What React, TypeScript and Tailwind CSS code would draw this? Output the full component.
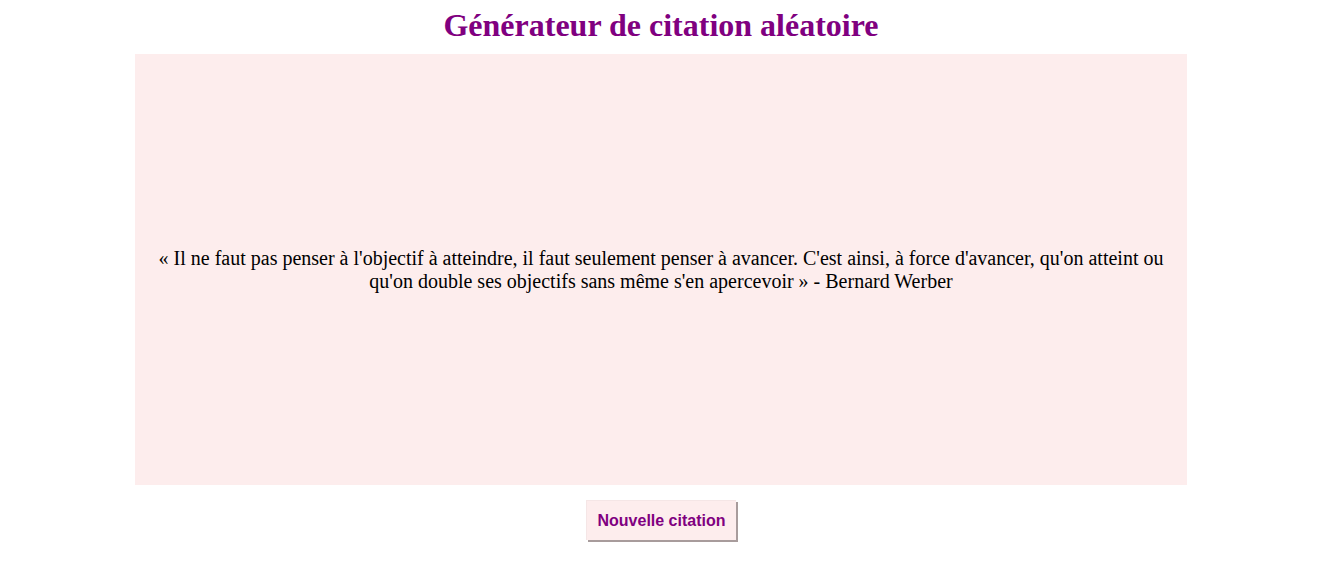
import { useState } from 'react';

const quotes = [
  "« Il ne faut pas penser à l'objectif à atteindre, il faut seulement penser à avancer. C'est ainsi, à force d'avancer, qu'on atteint ou qu'on double ses objectifs sans même s'en apercevoir » - Bernard Werber",
  "« La vie, c'est comme une bicyclette, il faut avancer pour ne pas perdre l'équilibre. » - Albert Einstein",
];

export default function App() {
  const [index, setIndex] = useState(0);

  return (
    <div className="min-h-screen bg-white w-[1322px] font-['Liberation_Serif',serif]">
      <h1 className="text-center text-[32px] font-bold leading-[37px] text-[#800080] pt-[7px] pb-[10px]">
        Générateur de citation aléatoire
      </h1>
      <div className="mx-[135px] h-[431px] bg-[#fdeded] flex items-center justify-center px-[20px]">
        <p className="text-center text-[20px] leading-[23px] text-black">{quotes[index]}</p>
      </div>
      <div className="flex justify-center pt-[15px]">
        <button
          onClick={() => setIndex((index + 1) % quotes.length)}
          className="h-[40px] px-[10px] bg-[#fdeded] text-[#800080] font-bold text-[16px] font-['Liberation_Sans',sans-serif] border-t border-l border-[#f5e6e6] shadow-[2px_2px_0_#a89c9c]"
        >
          Nouvelle citation
        </button>
      </div>
    </div>
  );
}
